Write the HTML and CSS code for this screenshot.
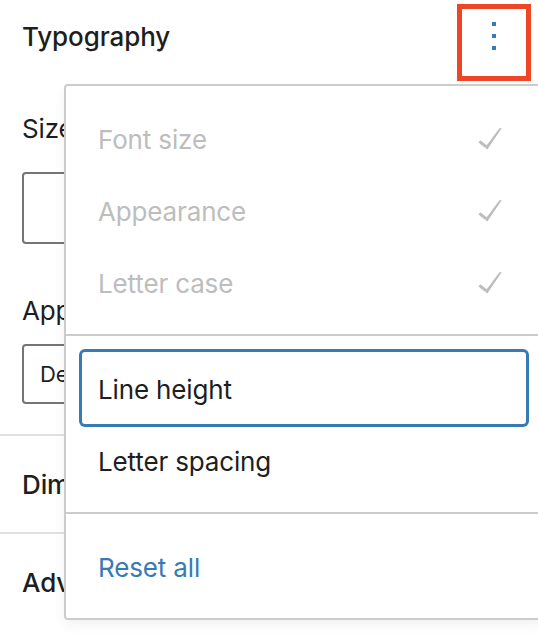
FILE: index.html
```html
<!DOCTYPE html>
<html lang="en">
<head>
<meta charset="utf-8">
<title>Typography panel</title>
<link rel="stylesheet" href="styles.css">
</head>
<body>
<div class="panel">
  <section class="typography">
    <header class="panel-header">
      <h2 class="panel-title">Typography</h2>
      <button class="more-button" type="button" aria-label="Options">
        <span class="dot"></span><span class="dot"></span><span class="dot"></span>
      </button>
    </header>
    <label class="field-label size-label">Size</label>
    <div class="size-input"></div>
    <label class="field-label appearance-label">Appearance</label>
    <div class="select-input">Default</div>
  </section>
  <section class="collapsed dimensions"><h2 class="panel-title">Dimensions</h2></section>
  <section class="collapsed advanced"><h2 class="panel-title">Advanced</h2></section>

  <div class="menu">
    <div class="menu-group">
      <div class="menu-item disabled"><span>Font size</span>
        <svg class="check" viewBox="0 0 24 24" width="48" height="48"><path d="M16.7 7.1l-6.3 8.5-3.3-2.5-.9 1.2 4.5 3.4L17.9 7z"/></svg></div>
      <div class="menu-item disabled"><span>Appearance</span>
        <svg class="check" viewBox="0 0 24 24" width="48" height="48"><path d="M16.7 7.1l-6.3 8.5-3.3-2.5-.9 1.2 4.5 3.4L17.9 7z"/></svg></div>
      <div class="menu-item disabled"><span>Letter case</span>
        <svg class="check" viewBox="0 0 24 24" width="48" height="48"><path d="M16.7 7.1l-6.3 8.5-3.3-2.5-.9 1.2 4.5 3.4L17.9 7z"/></svg></div>
    </div>
    <div class="menu-group">
      <div class="menu-item focused"><span>Line height</span></div>
      <div class="menu-item"><span>Letter spacing</span></div>
    </div>
    <div class="menu-group">
      <div class="menu-item reset"><span>Reset all</span></div>
    </div>
  </div>
</div>
</body>
</html>
```
FILE: styles.css
```css
* { box-sizing: border-box; }
html, body { margin: 0; height: 100%; }
body {
  width: 538px;
  height: 634px;
  overflow: hidden;
  background: #fff;
  color: #1e1e1e;
  font-family: Inter, "Liberation Sans", sans-serif;
  font-size: 26px;
  line-height: 32px;
  letter-spacing: -0.15px;
}
.panel { position: relative; height: 634px; overflow: hidden; }
.typography { height: 434px; padding: 4px 0 0 22px; }
.panel-header {
  display: flex;
  justify-content: space-between;
  align-items: flex-start;
  height: 77px;
  padding-right: 7px;
}
.panel-header .panel-title { margin-top: 17px; }
.panel-title { margin: 0; font-size: 26px; font-weight: 500; line-height: 32px; letter-spacing: -0.1px; }
.more-button {
  display: flex;
  flex-direction: column;
  align-items: center;
  gap: 8px;
  width: 74px;
  height: 77px;
  padding: 13px 0 0;
  border: 5px solid #ee4527;
  background: #fff;
}
.dot { width: 4px; height: 4px; background: #387ab5; }
.field-label { display: block; }
.size-label { margin-top: 32px; }
.size-input {
  width: 494px;
  height: 72px;
  margin-top: 27px;
  border: 2px solid #757575;
  border-radius: 4px;
}
.appearance-label { margin-top: 51px; }
.select-input {
  width: 494px;
  height: 60px;
  margin-top: 17px;
  padding: 0 0 0 16px;
  border: 2px solid #757575;
  border-radius: 4px;
  font-size: 22px;
  line-height: 56px;
}
.collapsed {
  display: flex;
  align-items: center;
  padding-left: 22px;
  border-top: 2px solid #e0e0e0;
}
.dimensions { height: 98px; padding-top: 2px; }
.advanced { height: 102px; padding-bottom: 2px; }
.menu {
  position: absolute;
  top: 84px;
  left: 64px;
  width: 480px;
  height: 536px;
  background: #fff;
  border: 2px solid #ccc;
  border-radius: 4px;
  box-shadow: 0 6px 12px rgba(0, 0, 0, 0.05);
}
.menu-group { padding: 16px; }
.menu-group + .menu-group { border-top: 2px solid #ccc; }
.menu-item {
  display: flex;
  justify-content: space-between;
  align-items: center;
  height: 72px;
  padding: 0 12px 0 16px;
}
.menu-item span { padding-top: 3px; }
.menu-item.disabled { color: #bdbdbd; }
.menu-item.focused { border-radius: 3px; box-shadow: 0 0 0 3px #387ab5; }
.menu-item.reset { color: #387ab5; }
.check { fill: #bdbdbd; }
```
